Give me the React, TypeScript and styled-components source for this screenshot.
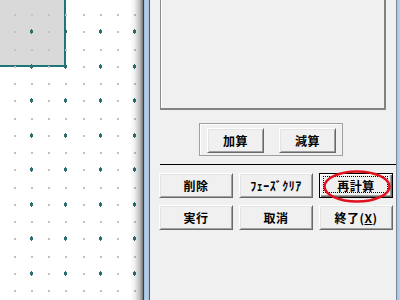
import styled, { createGlobalStyle } from 'styled-components'

const GlobalStyle = createGlobalStyle`
  html, body {
    margin: 0;
    padding: 0;
    overflow: hidden;
    background: #ffffff;
  }
`

const Screen = styled.div`
  display: flex;
  width: 400px;
  height: 300px;
  overflow: hidden;
  font-family: "Noto Sans CJK JP", "Liberation Sans", sans-serif;
`

const Canvas = styled.div`
  position: relative;
  width: 143px;
  height: 300px;
  flex: none;
  background: #ffffff;
  overflow: hidden;
`

const CanvasShade = styled.div`
  position: absolute;
  top: 0;
  right: 0;
  width: 13px;
  height: 100%;
  background: linear-gradient(
    to right,
    rgba(0, 0, 0, 0) 0%,
    rgba(0, 0, 0, 0.06) 35%,
    rgba(0, 0, 0, 0.25) 75%,
    rgba(0, 0, 0, 0.55) 100%
  );
`

const Splitter = styled.div`
  width: 5px;
  flex: none;
  border-left: 1px solid #3e3e3e;
  border-right: 1px solid #4a5868;
  background: linear-gradient(to right, #9fb9d6, #b8d1ec 40%, #a6c0dd);
`

const Panel = styled.div`
  width: 246px;
  flex: none;
  display: flex;
  flex-direction: column;
  background: #f0f0f0;
`

const WindowEdge = styled.div`
  width: 3px;
  flex: none;
  border-left: 1px solid #75889c;
  background: linear-gradient(to right, #a7c3e2, #b9d2ec);
`

const ListBox = styled.div`
  height: 110px;
  margin: 0 10px;
  box-sizing: border-box;
  background: #f0f0f0;
  border-left: 1px solid #8c8c8c;
  border-right: 2px solid #838383;
  border-bottom: 2px solid #838383;
  box-shadow: inset 1px 0 0 #ffffff;
`

const GroupBox = styled.div`
  display: flex;
  align-items: flex-start;
  gap: 15px;
  width: 144px;
  height: 33px;
  box-sizing: border-box;
  margin: 13px 0 0 49px;
  padding: 4px 0 0 7px;
  border: 1px solid #a0a0a0;
  box-shadow: inset 1px 1px 0 #ffffff;
`

const Separator = styled.div`
  height: 1px;
  margin: 8px 0 0 10px;
  background: #000000;
`

const ButtonGrid = styled.div`
  display: grid;
  grid-template-columns: repeat(3, 74px);
  grid-auto-rows: 25px;
  column-gap: 6px;
  row-gap: 7px;
  margin: 8px 0 0 9px;
`

const Button = styled.button<{ $width?: number; $default?: boolean }>`
  position: relative;
  width: ${(p) => (p.$width ? `${p.$width}px` : '100%')};
  height: 25px;
  box-sizing: border-box;
  margin: 0;
  padding: 0;
  display: flex;
  align-items: center;
  justify-content: center;
  background: #f0f0f0;
  color: #000000;
  font-family: "Noto Sans CJK JP", "Liberation Sans", sans-serif;
  font-size: 12px;
  font-weight: 700;
  letter-spacing: 0.5px;
  border: 1px solid;
  border-color: ${(p) => (p.$default ? '#000000' : '#ffffff #696969 #696969 #ffffff')};
  box-shadow: ${(p) =>
    p.$default
      ? 'inset 1px 1px 0 #ffffff, inset -1px -1px 0 #696969, inset -2px -2px 0 #a0a0a0'
      : 'inset 1px 1px 0 #e3e3e3, inset -1px -1px 0 #a0a0a0'};

  &::after {
    content: '';
    display: ${(p) => (p.$default ? 'block' : 'none')};
    position: absolute;
    inset: 2px 4px 4px 3px;
    border: 1px dotted #000000;
  }
`

const Mnemonic = styled.span`
  text-decoration: underline;
  text-underline-offset: 1px;
`

const Highlight = styled.svg`
  position: absolute;
  left: 3px;
  top: -4px;
  overflow: visible;
  pointer-events: none;
  z-index: 2;
`

const DOT_STEP_X = 120 / 7
const DOT_STEP_Y = 17.25

function DesignGrid() {
  const dots = []
  for (let i = 0; i < 9; i++) {
    for (let j = 0; j < 18; j++) {
      const x = Math.round(14 + i * DOT_STEP_X)
      const y = Math.round(14 + j * DOT_STEP_Y)
      if (i % 2 === 1 && j % 2 === 1) {
        dots.push(
          <g key={`${i}-${j}`} fill="#2c6f70">
            <rect x={x - 1} y={y - 1} width={3} height={3} />
            <rect x={x} y={y - 2} width={1} height={5} />
          </g>,
        )
      } else {
        dots.push(<rect key={`${i}-${j}`} x={x} y={y} width={2} height={2} fill="#c2c2c2" />)
      }
    }
  }
  return (
    <svg width="143" height="300" viewBox="0 0 143 300">
      <rect x="0" y="0" width="64" height="65" fill="#d9d9d9" />
      <rect x="64" y="0" width="2" height="67" fill="#1f7676" />
      <rect x="0" y="65" width="66" height="2" fill="#1f7676" />
      {dots}
    </svg>
  )
}

export default function App() {
  return (
    <>
      <GlobalStyle />
      <Screen>
        <Canvas>
          <DesignGrid />
          <CanvasShade />
        </Canvas>
        <Splitter />
        <Panel>
          <ListBox />
          <GroupBox>
            <Button $width={57}>加算</Button>
            <Button $width={57}>減算</Button>
          </GroupBox>
          <Separator />
          <ButtonGrid>
            <Button>削除</Button>
            <Button>ﾌｪｰｽﾞｸﾘｱ</Button>
            <Button $default>
              再計算
              <Highlight width="68" height="33" viewBox="0 0 68 33">
                <ellipse cx="34" cy="16.5" rx="32.5" ry="15" fill="none" stroke="#e0101e" strokeWidth="2.5" />
              </Highlight>
            </Button>
            <Button>実行</Button>
            <Button>取消</Button>
            <Button>
              終了(<Mnemonic>X</Mnemonic>)
            </Button>
          </ButtonGrid>
        </Panel>
        <WindowEdge />
      </Screen>
    </>
  )
}
